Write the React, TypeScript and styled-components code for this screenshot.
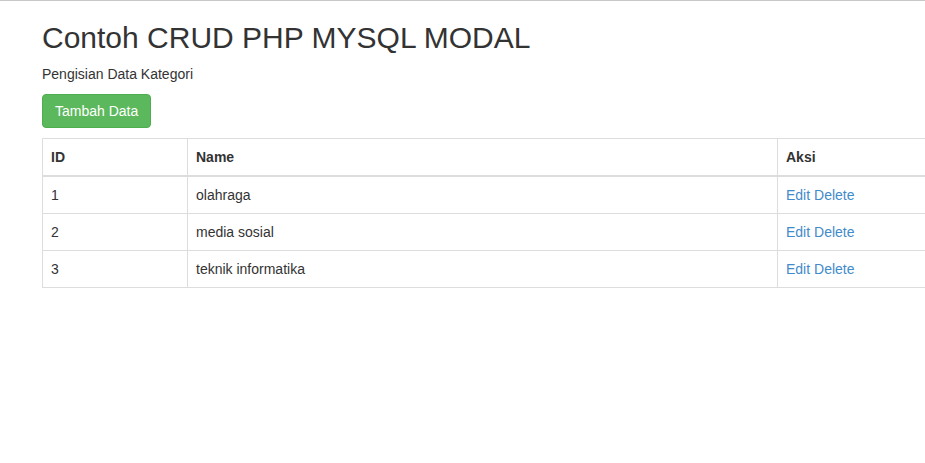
import React from "react";
import styled, { createGlobalStyle } from "styled-components";

const GlobalStyle = createGlobalStyle`
  html { overflow: hidden; }
  body {
    margin: 0;
    border-top: 1px solid #c8c8c8;
    background: #fff;
    color: #333;
    font-family: "Liberation Sans", Arial, Helvetica, sans-serif;
    font-size: 14px;
    line-height: 1.42857143;
  }
  * { box-sizing: border-box; }
`;

const Viewport = styled.div`
  width: 100%;
  overflow: hidden;
`;

const Container = styled.div`
  padding-left: 42px;
  width: 982px;
`;

const Title = styled.h2`
  margin: 20px 0 10px;
  font-size: 30px;
  font-weight: 500;
  line-height: 1.1;
  color: #333;
`;

const Subtitle = styled.p`
  margin: 0 0 10px;
`;

const Button = styled.button`
  display: inline-block;
  margin: 0 0 10px;
  padding: 6px 12px;
  font-family: inherit;
  font-size: 14px;
  line-height: 20px;
  color: #fff;
  background: #5cb85c;
  border: 1px solid #4cae4c;
  border-radius: 4px;
  cursor: pointer;
`;

const Table = styled.table`
  width: 940px;
  border-collapse: collapse;
  border-spacing: 0;
  border: 1px solid #ddd;
  margin-bottom: 20px;
`;

const Th = styled.th<{ $w?: number }>`
  width: ${(p) => (p.$w ? `${p.$w}px` : "auto")};
  text-align: left;
  font-weight: bold;
  padding: 8px;
  line-height: 20px;
  border: 1px solid #ddd;
  border-bottom-width: 2px;
  vertical-align: bottom;
`;

const Td = styled.td`
  padding: 8px;
  line-height: 20px;
  border: 1px solid #ddd;
  vertical-align: top;
`;

const Link = styled.a`
  color: #428bca;
  text-decoration: none;
`;

const rows = [
  { id: 1, name: "olahraga" },
  { id: 2, name: "media sosial" },
  { id: 3, name: "teknik informatika" },
];

export default function App() {
  return (
    <>
      <GlobalStyle />
      <Viewport>
        <Container>
          <Title>Contoh CRUD PHP MYSQL MODAL</Title>
          <Subtitle>Pengisian Data Kategori</Subtitle>
          <Button type="button">Tambah Data</Button>
          <Table>
            <thead>
              <tr>
                <Th $w={145}>ID</Th>
                <Th $w={590}>Name</Th>
                <Th>Aksi</Th>
              </tr>
            </thead>
            <tbody>
              {rows.map((r) => (
                <tr key={r.id}>
                  <Td>{r.id}</Td>
                  <Td>{r.name}</Td>
                  <Td>
                    <Link href="#">Edit</Link> <Link href="#">Delete</Link>
                  </Td>
                </tr>
              ))}
            </tbody>
          </Table>
        </Container>
      </Viewport>
    </>
  );
}
